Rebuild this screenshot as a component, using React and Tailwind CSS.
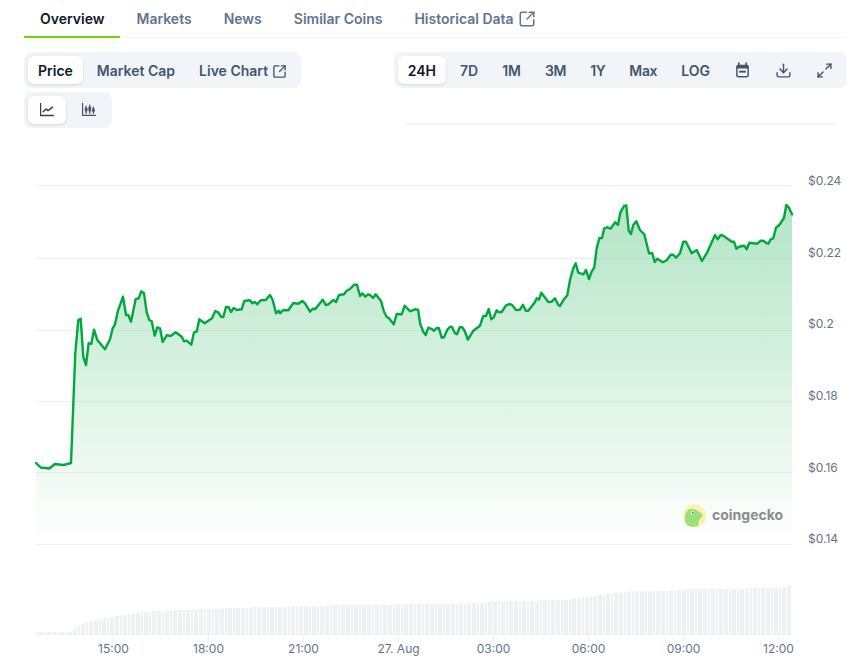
import React from "react";
import { SquareArrowOutUpRight, Download, Maximize2 } from "lucide-react";

const tabs = ["Overview", "Markets", "News", "Similar Coins", "Historical Data"];
const ranges = [
    { label: "24H" },
    { label: "7D" },
    { label: "1M" },
    { label: "3M", tight: true },
    { label: "1Y", tight: true },
    { label: "Max", tight: true },
    { label: "LOG" },
];

// toạ độ đường giá lấy theo ảnh
const line = "36,463 40.7,467.5 45,468 49.3,468.5 55,464 63.3,465 69.3,463.5 71,463 75.3,353 78.3,320 80.7,318.7 83.3,357 86,365 88.7,343 91.3,344 94,329.7 97.3,340 105,349.3 110,339.3 112.7,328.3 115,324.3 117.7,311.7 123,296.7 126,315 128.3,315 131,321.7 135.7,299 138.7,298.3 141.3,291.3 144,293.3 146.7,312.3 149.3,320 151.7,321.3 154.7,335.7 157.3,327.3 160,328.3 162.7,342 166.7,335.3 170.7,336 175.7,332.3 181.7,336.7 184,341.3 186.7,340.7 191.3,344.7 194,332.3 196.7,331.7 199.3,319.3 204.7,323.3 212,318.3 215.3,311 218.3,312.3 221,316.7 223.3,317 226,307 228.7,307.3 231,312 233.7,308 236.7,310 241.7,309.3 244.3,301 250,300.3 252.3,303.3 255,302 257.3,304.3 260.7,300.3 265.7,300 270,295 272.7,300 276,313.3 278.7,310.7 280,313.3 283.3,310 288.3,310.3 293.3,303 298.3,303.7 302.3,301 305,303.3 310,311.7 312.7,308.7 315.3,309 322.7,299.7 325.7,305 328.3,304.3 333.3,300 336,302 339,295 344,294.3 346.7,290.7 350,289 354,284.7 357,284.7 360,296 362.3,293.3 365.3,296.7 368,294.3 370,295 373,298 375.7,294.3 381,301 384,311.7 386.7,317 389,318.3 393.7,324.3 396.7,314 401.7,314.3 404.7,305.7 410,311.3 415,309.3 418,309.7 420.3,324.3 423.3,331.7 425.7,335 428.3,327.7 431.7,329 434,330.7 436.7,328 439,328.3 441.7,337.7 444,337.3 447.3,329.7 450,326.7 452,327 455,333.3 457,334.3 459.7,327.3 462.3,327.3 464.7,331 468,339.7 473.3,330.7 480,325.7 483.3,316 486,316 488.7,309 491.3,319.3 493.7,317.3 496.7,310.3 499,312.3 501.7,312 506,305.3 510,304 512.3,305.3 516,310 520,309.7 523,304.7 525.7,310.7 528.3,310.7 535,302 536.7,298.3 539,299.7 541.3,292.7 548.3,302 551.7,301.7 555,298.3 558.3,305 560,306 563.3,300.3 567.3,295.3 570,280 573.3,268.3 575.7,263.3 578.3,272.7 583.3,274.3 586,270 589,279 591.7,271.7 594.3,267.3 596.7,248.3 599.3,238.3 602,238 604.3,228.3 607.3,227.3 610.7,228.7 615,222.3 618,224.7 620.3,212.7 624,206 626.3,205.3 628.7,230.7 631,234 633.3,225 636.3,221.3 640,230 644.3,234.3 649,253.3 652.3,253.3 654.7,262 657.3,258.7 662.7,262.3 666.7,260.3 670.7,254.7 673.3,254.7 676,257.7 680,253.3 683.3,241.7 686,241.7 691.7,253.3 696.7,250 702,261 707.3,252.3 715,235 717.7,239.3 720.7,235 723.3,235.7 731.7,241.7 734,241.7 736.3,248.7 739,246.7 744.3,245.7 746.7,249.3 749.3,242.7 757.3,243.7 760.7,240.7 763.3,240.7 766.7,243.3 768.3,243.7 770.7,239.3 773.3,238.3 776,227.7 779.3,225 784,218 786.3,205 789,207.7 792,214.3";

const gridY = [185, 258, 330, 401, 472, 544];
const yLabels = [["$0.24", 185], ["$0.22", 257], ["$0.2", 328], ["$0.18", 400], ["$0.16", 472], ["$0.14", 543]];
const xLabels = [["15:00", 113], ["18:00", 208], ["21:00", 303], ["27. Aug", 398], ["03:00", 493], ["06:00", 588], ["09:00", 683], ["12:00", 778]];

// đỉnh cột volume: [x, y]
const volTops = [[36, 632], [72, 632], [75, 627], [80, 624.5], [88, 621], [100, 619], [117, 616], [140, 612], [160, 611], [200, 609.3], [233, 608], [267, 607], [350, 605], [433, 604], [480, 602.7], [513, 601], [563, 600], [597, 595.3], [633, 591], [660, 591.3], [683, 589.5], [740, 588.7], [773, 587.7], [792, 586]];

const volTop = (x) => {
    for (let i = 1; i < volTops.length; i++) {
        const [x0, y0] = volTops[i - 1];
        const [x1, y1] = volTops[i];
        if (x <= x1) return y0 + ((x - x0) / (x1 - x0)) * (y1 - y0);
    }
    return 586;
};

const bars = Array.from({ length: 288 }, (_, i) => {
    const x = Math.round(36 + i * 2.625);
    return { x, top: Math.round(volTop(x)) };
});

const CalendarIcon = () => (
    <svg width="17" height="17" viewBox="0 0 16 16" fill="none">
        <path d="M4.5 1v2.5M11.5 1v2.5" stroke="#475569" strokeWidth="1.6" strokeLinecap="round" />
        <rect x="2" y="2.5" width="12" height="12" rx="2" fill="#475569" />
        <rect x="3.4" y="6" width="9.2" height="7.1" rx="0.8" fill="#f1f5f9" />
        <rect x="4.8" y="8.2" width="6.4" height="1.8" fill="#475569" />
    </svg>
);

const LineChartIcon = () => (
    <svg width="14" height="14" viewBox="1.5 1.5 13.5 13.5" fill="none" stroke="#334155" strokeWidth="1.4" strokeLinecap="round" strokeLinejoin="round">
        <path d="M2 2v11.5h12.5" />
        <path d="M4.5 10l2.8-2.8 2 1.6L13.5 5.5" />
    </svg>
);

const CandleIcon = () => (
    <svg width="14" height="14" viewBox="1.5 1.5 13.5 13.5" fill="none" stroke="#475569" strokeWidth="1.3" strokeLinecap="round">
        <path d="M2 2v11.5h12.5" />
        <path d="M5.5 4.5v7M9 3.5v8M12.5 5.5v6" />
        <rect x="4.2" y="6" width="2.6" height="3.5" rx="0.5" fill="#475569" stroke="none" />
        <rect x="7.7" y="5" width="2.6" height="4.5" rx="0.5" fill="#475569" stroke="none" />
        <rect x="11.2" y="7" width="2.6" height="3" rx="0.5" fill="#475569" stroke="none" />
    </svg>
);

const GroupButton = ({ active, children, className = "" }) => (
    <button className={`${active ? "bg-white text-slate-900 shadow-sm" : "text-slate-600"} flex h-7 items-center justify-center rounded-md px-2.5 text-sm font-semibold ${className}`}>
        {children}
    </button>
);

const Chart = () => (
    <svg width="847" height="536" viewBox="0 128 847 536" className="block">
        <defs>
            <linearGradient id="area" x1="0" y1="205" x2="0" y2="544" gradientUnits="userSpaceOnUse">
                <stop offset="0" stopColor="#00a83e" stopOpacity="0.3" />
                <stop offset="1" stopColor="#00a83e" stopOpacity="0" />
            </linearGradient>
        </defs>
        {gridY.map((y) => (
            <line key={y} x1="36" x2="792" y1={y + 0.5} y2={y + 0.5} stroke="#eef1f5" />
        ))}
        <path d={`M${line} L792,544 L36,544 Z`} fill="url(#area)" />
        <polyline points={line} fill="none" stroke="#00a83e" strokeWidth="2.4" strokeLinejoin="round" strokeLinecap="round" />

        {bars.map((b, i) => (
            <rect key={i} x={b.x} y={b.top} width="2" height={634 - b.top} fill="#eff2f5" shapeRendering="crispEdges" />
        ))}
        <line x1="36" x2="792" y1="634.5" y2="634.5" stroke="#eff2f5" />
        {xLabels.map(([label, x]) => (
            <line key={label} x1={x + 0.5} x2={x + 0.5} y1="634" y2="642" stroke="#eff2f5" />
        ))}

        <g fontFamily="Inter, sans-serif" fontSize="12" fill="#64748b">
            {yLabels.map(([label, y]) => (
                <text key={label} x="808" y={y}>{label}</text>
            ))}
            {xLabels.map(([label, x]) => (
                <text key={label} x={x + 0.5} y="653" textAnchor="middle">{label}</text>
            ))}
        </g>

        {/* logo coingecko */}
        <circle cx="694.5" cy="516" r="11.5" fill="#fdf3ad" />
        <path d="M686 524c-1.5-5-1.5-10 1-13 2-2.5 6-3 8.5-1.5 2 1 5 3 7.5 5.5-1 3-3 3.5-4 5.5-.5 2-.5 4-1 5.500-4 1.500-9 1-12-2z" fill="#9be07a" />
        <circle cx="692.5" cy="513" r="1.7" fill="#fff" />
        <circle cx="692.8" cy="513" r="0.9" fill="#5b6b5b" />
        <text x="712" y="520" fontFamily="Inter, sans-serif" fontSize="14" fontWeight="700" fill="#8c8c8c">coingecko</text>
    </svg>
);

const App = () => {
    return (
        <div className="w-full bg-white font-['Inter',sans-serif]">
            <div className="pl-6">
                <div className="flex border-b border-slate-100">
                    {tabs.map((tab, i) => (
                        <div
                            key={tab}
                            className={`${i === 0 ? "border-lime-500 text-slate-900" : "border-transparent text-slate-500"} -mb-px flex items-center gap-1 border-b-2 px-4 pt-2.25 pb-1.75 text-sm font-semibold`}
                        >
                            {tab}
                            {tab === "Historical Data" && <SquareArrowOutUpRight size={18} />}
                        </div>
                    ))}
                </div>

                <div className="flex items-start justify-between pt-3.5">
                    <div className="flex flex-col gap-1">
                        <div className="flex w-fit gap-1 rounded-lg bg-slate-100 p-1">
                            <GroupButton active className="pt-0.5">Price</GroupButton>
                            <GroupButton className="pt-0.5">Market Cap</GroupButton>
                            <GroupButton className="gap-1 pt-0.5">
                                Live Chart
                                <SquareArrowOutUpRight size={15} strokeWidth={2.2} />
                            </GroupButton>
                        </div>
                        <div className="flex w-fit gap-1 rounded-lg bg-slate-100 p-1">
                            <GroupButton active className="px-3"><LineChartIcon /></GroupButton>
                            <GroupButton className="px-3"><CandleIcon /></GroupButton>
                        </div>
                    </div>

                    <div className="flex flex-col">
                        <div className="flex gap-1 rounded-lg bg-slate-100 p-1">
                            {ranges.map((range, i) => (
                                <GroupButton key={range.label} active={i === 0} className={`${range.tight ? "tracking-tight" : ""} pt-0.5`}>
                                    {range.label}
                                </GroupButton>
                            ))}
                            <GroupButton><CalendarIcon /></GroupButton>
                            <GroupButton><Download size={17} /></GroupButton>
                            <GroupButton><Maximize2 size={17} /></GroupButton>
                        </div>
                        <div className="mx-3 mt-8.75 h-0.5 bg-gray-100" />
                    </div>
                </div>
            </div>
            <Chart />
        </div>
    );
};

export default App;
